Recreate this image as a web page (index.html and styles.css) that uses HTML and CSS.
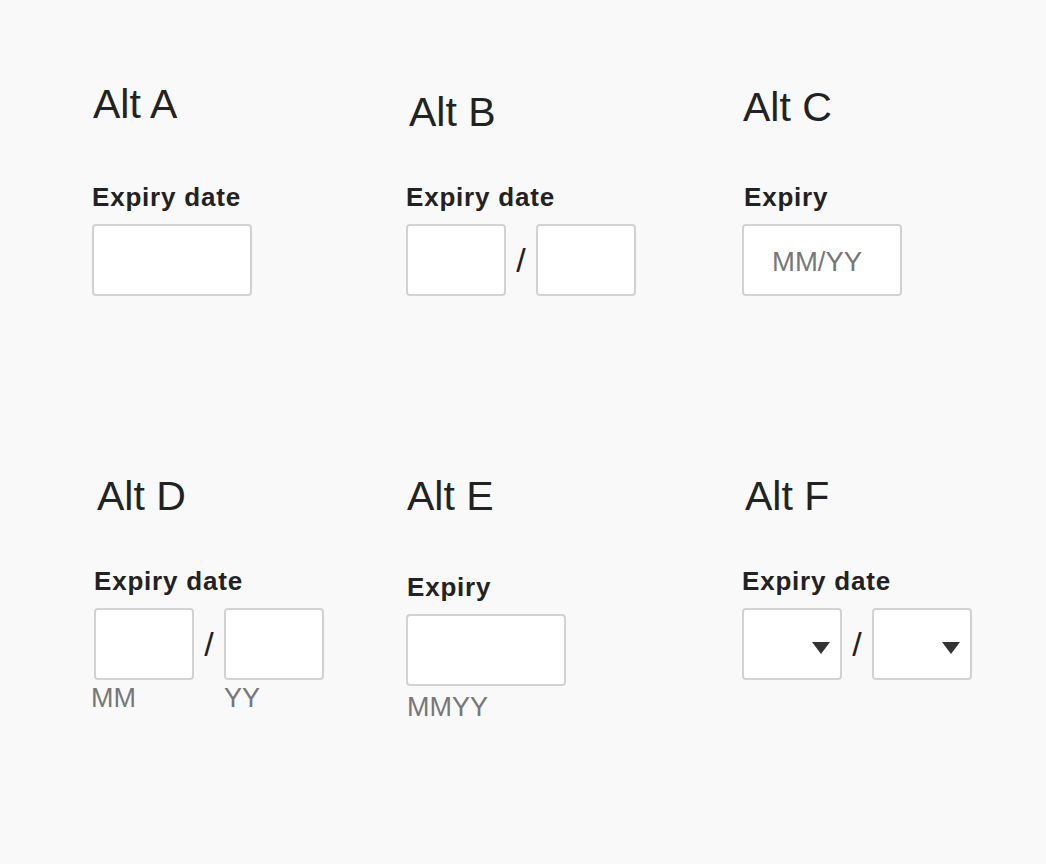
FILE: index.html
```html
<!DOCTYPE html>
<html lang="en">
<head>
<meta charset="utf-8">
<title>Expiry date alternatives</title>
<link rel="stylesheet" href="styles.css">
</head>
<body>
<main class="grid">
  <section class="alt alt-a">
    <h2 class="title title-r1 title-a">Alt A</h2>
    <label class="label">Expiry date</label>
    <div class="box box-wide"></div>
  </section>

  <section class="alt alt-b">
    <h2 class="title title-r1 title-b">Alt B</h2>
    <label class="label">Expiry date</label>
    <div class="split">
      <div class="box box-half"></div>
      <span class="slash">/</span>
      <div class="box box-half"></div>
    </div>
  </section>

  <section class="alt alt-c">
    <h2 class="title title-r1 title-c">Alt C</h2>
    <label class="label label-c">Expiry</label>
    <input class="box box-wide box-input" type="text" placeholder="MM/YY">
  </section>

  <section class="alt alt-d">
    <h2 class="title title-r2 title-d">Alt D</h2>
    <label class="label">Expiry date</label>
    <div class="split">
      <div class="box box-half"></div>
      <span class="slash">/</span>
      <div class="box box-half"></div>
    </div>
    <div class="hints">
      <span class="hint">MM</span>
      <span class="hint">YY</span>
    </div>
  </section>

  <section class="alt alt-e">
    <h2 class="title title-r2 title-e">Alt E</h2>
    <label class="label label-e">Expiry</label>
    <div class="box box-wide"></div>
    <span class="hint hint-e">MMYY</span>
  </section>

  <section class="alt alt-f">
    <h2 class="title title-r2 title-f">Alt F</h2>
    <label class="label">Expiry date</label>
    <div class="split">
      <div class="box box-half select"><span class="caret"></span></div>
      <span class="slash">/</span>
      <div class="box box-half select"><span class="caret"></span></div>
    </div>
  </section>
</main>
</body>
</html>
```

FILE: styles.css
```css
* {
  box-sizing: border-box;
}

html, body {
  margin: 0;
  padding: 0;
  background: #f9f9f9;
}

body {
  font-family: "Liberation Sans", Arial, Helvetica, sans-serif;
  color: #222;
  width: 1046px;
  height: 864px;
  overflow: hidden;
}

.grid {
  display: grid;
  grid-template-columns: 314px 336px 1fr;
  row-gap: 176px;
  padding: 80px 0 0 92px;
  align-items: start;
}

.alt {
  display: flex;
  flex-direction: column;
  align-items: flex-start;
}

.alt-d {
  padding-left: 2px;
}

.title {
  margin: 0;
  font-size: 41px;
  font-weight: normal;
  line-height: 48px;
  white-space: nowrap;
}

.title-r1 {
  height: 102px;
}

.title-a {
  margin-left: 1px;
}

.title-b {
  padding-top: 8px;
  margin-left: 3px;
}

.title-c {
  padding-top: 3px;
  margin-left: 1px;
}

.title-r2 {
  height: 94px;
}

.title-d {
  margin-left: 3px;
}

.title-e {
  height: 100px;
  margin-left: 1px;
}

.title-f {
  margin-left: 3px;
}

.label {
  display: block;
  font-size: 26px;
  font-weight: bold;
  line-height: 30px;
  letter-spacing: 0.8px;
  margin-bottom: 12px;
  white-space: nowrap;
}

.label-c {
  margin-left: 2px;
}

.label-e {
  margin-left: 1px;
}

.box {
  display: block;
  height: 72px;
  background: #fff;
  border: 2px solid #d2d2d2;
  border-radius: 4px;
}

.box-wide {
  width: 160px;
}

.box-half {
  width: 100px;
}

.box-input {
  margin: 0;
  padding: 3px 0 0 28px;
  font-family: "Liberation Sans", Arial, Helvetica, sans-serif;
  font-size: 27.5px;
  color: #222;
  outline: none;
}

.box-input::placeholder {
  color: #777;
  opacity: 1;
}

.split {
  display: flex;
  align-items: center;
}

.slash {
  width: 30px;
  text-align: center;
  font-size: 34px;
  line-height: 40px;
  color: #222;
}

.select {
  display: flex;
  align-items: center;
  justify-content: flex-end;
  padding: 7px 10px 0 0;
}

.caret {
  width: 0;
  height: 0;
  border-left: 9px solid transparent;
  border-right: 9px solid transparent;
  border-top: 12px solid #333;
}

.hints {
  display: grid;
  grid-template-columns: 133px auto;
  margin: 3px 0 0 -3px;
}

.hint {
  font-size: 27px;
  line-height: 30px;
  color: #777;
}

.hint-e {
  margin-top: 6px;
  margin-left: 1px;
}
```
